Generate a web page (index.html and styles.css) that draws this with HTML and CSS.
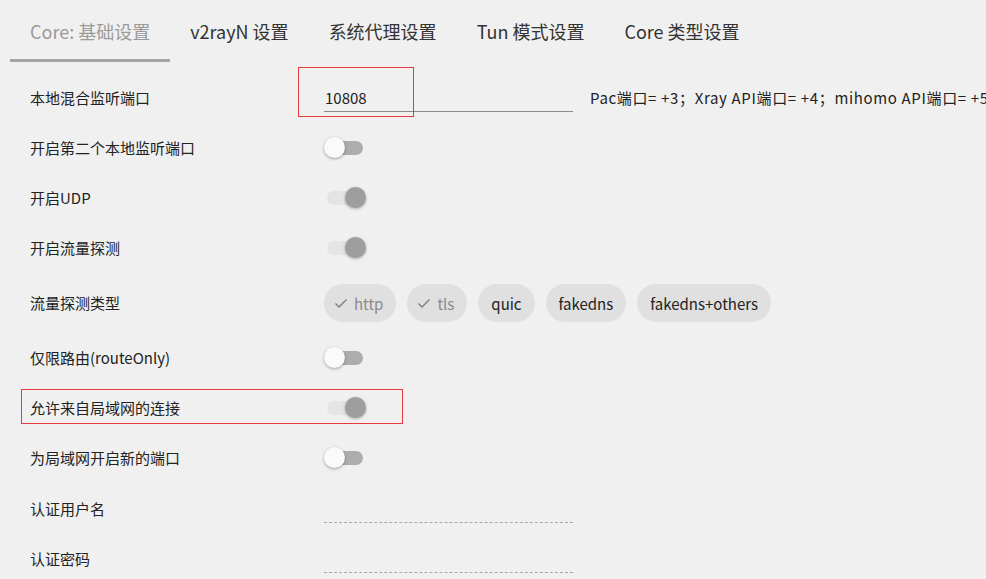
FILE: index.html
```html
<!DOCTYPE html>
<html lang="zh-CN">
<head>
<meta charset="utf-8">
<title>设置</title>
<link rel="stylesheet" href="styles.css">
</head>
<body>
<div class="tabs">
  <div class="tab active">Core: 基础设置</div>
  <div class="tab">v2rayN 设置</div>
  <div class="tab">系统代理设置</div>
  <div class="tab">Tun 模式设置</div>
  <div class="tab">Core 类型设置</div>
</div>
<div class="form">
  <div class="row">
    <div class="label">本地混合监听端口</div>
    <div class="control">
      <div class="field solid">10808</div>
      <div class="hint">Pac端口= +3；Xray API端口= +4；mihomo API端口= +5</div>
    </div>
    <span class="mark mark-port"></span>
  </div>
  <div class="row">
    <div class="label">开启第二个本地监听端口</div>
    <div class="control"><span class="toggle"></span></div>
  </div>
  <div class="row">
    <div class="label">开启UDP</div>
    <div class="control"><span class="toggle on"></span></div>
  </div>
  <div class="row">
    <div class="label">开启流量探测</div>
    <div class="control"><span class="toggle on"></span></div>
  </div>
  <div class="row chips-row">
    <div class="label">流量探测类型</div>
    <div class="control chips">
      <span class="chip sel"><svg class="check" viewBox="0 0 14 14" width="14" height="14"><polyline points="1.5,7.5 5,11 12.5,3.5" fill="none" stroke="#7a7a7a" stroke-width="1.3"/></svg>http</span>
      <span class="chip sel"><svg class="check" viewBox="0 0 14 14" width="14" height="14"><polyline points="1.5,7.5 5,11 12.5,3.5" fill="none" stroke="#7a7a7a" stroke-width="1.3"/></svg>tls</span>
      <span class="chip">quic</span>
      <span class="chip">fakedns</span>
      <span class="chip">fakedns+others</span>
    </div>
  </div>
  <div class="row">
    <div class="label">仅限路由(routeOnly)</div>
    <div class="control"><span class="toggle"></span></div>
  </div>
  <div class="row">
    <div class="label">允许来自局域网的连接</div>
    <div class="control"><span class="toggle on"></span></div>
    <span class="mark mark-lan"></span>
  </div>
  <div class="row">
    <div class="label">为局域网开启新的端口</div>
    <div class="control"><span class="toggle"></span></div>
  </div>
  <div class="row text-row">
    <div class="label">认证用户名</div>
    <div class="control"><div class="field dashed"></div></div>
  </div>
  <div class="row last-row">
    <div class="label">认证密码</div>
    <div class="control"><div class="field dashed"></div></div>
  </div>
</div>
</body>
</html>
```

FILE: styles.css
```css
html, body {
  margin: 0;
  padding: 0;
  background: #f0f0f0;
  overflow: hidden;
  font-family: "Noto Sans CJK SC", "Noto Sans", sans-serif;
  color: #222;
}

.tabs {
  display: flex;
  padding-left: 10px;
  height: 62px;
}

.tab {
  box-sizing: border-box;
  height: 62px;
  padding: 3px 20px 0;
  border-bottom: 3px solid transparent;
  display: flex;
  align-items: center;
  font-size: 18px;
  color: #333;
  white-space: nowrap;
}

.tab.active {
  color: #9a9a9a;
  border-bottom-color: #a3a3a3;
}

.form {
  margin-top: 11px;
}

.row {
  position: relative;
  display: flex;
  align-items: center;
  height: 50px;
}

.chips-row {
  height: 60px;
}

.text-row {
  height: 52px;
}

.last-row {
  height: 48px;
}

.label {
  box-sizing: border-box;
  flex: 0 0 324px;
  width: 324px;
  padding-left: 30px;
  font-size: 15px;
  line-height: 20px;
  white-space: nowrap;
}

.control {
  display: flex;
  align-items: center;
  flex-shrink: 0;
  white-space: nowrap;
}

.field {
  box-sizing: border-box;
  flex: 0 0 249px;
  width: 249px;
  height: 27px;
  padding-left: 1px;
  font-size: 15px;
  line-height: 26px;
}

.field.solid {
  border-bottom: 1px solid #8a8a8a;
}

.field.dashed {
  border-bottom: 1px dashed #a8a8a8;
}

.hint {
  flex-shrink: 0;
  margin-left: 17px;
  font-size: 15px;
  line-height: 20px;
  letter-spacing: 0.65px;
}

.toggle {
  position: relative;
  display: block;
  width: 40px;
  height: 22px;
}

.toggle::before {
  content: "";
  position: absolute;
  left: 3px;
  top: 4px;
  width: 36px;
  height: 14px;
  border-radius: 7px;
  background: #adadad;
}

.toggle::after {
  content: "";
  position: absolute;
  left: 0;
  top: 0;
  width: 21px;
  height: 21px;
  border-radius: 50%;
  background: #fafafa;
  box-shadow: 0 1px 3px rgba(0, 0, 0, 0.35);
}

.toggle.on::before {
  background: #e4e4e4;
}

.toggle.on::after {
  left: 21px;
  background: #9e9e9e;
  box-shadow: 0 1px 3px rgba(0, 0, 0, 0.3);
}

.chips {
  gap: 11px;
}

.chip {
  display: flex;
  align-items: center;
  height: 38px;
  padding: 0 13px;
  border-radius: 19px;
  background: #e0e0e0;
  font-size: 15px;
  color: #222;
}

.chip.sel {
  color: #8a8a8a;
  padding-left: 10px;
}

.check {
  margin-right: 6px;
}

.mark {
  position: absolute;
  border: 1px solid #e8393e;
  box-sizing: border-box;
  pointer-events: none;
}

.mark-port {
  left: 298px;
  top: -6px;
  width: 116px;
  height: 50px;
}

.mark-lan {
  left: 21px;
  top: 6px;
  width: 382px;
  height: 35px;
}
```
